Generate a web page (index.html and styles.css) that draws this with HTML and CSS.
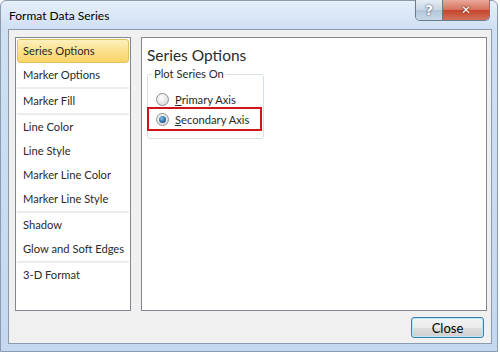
FILE: index.html
```html
<!DOCTYPE html>
<html>
    <head>
        <meta charset="utf-8">
        <title>Format Data Series</title>
        <link rel="stylesheet" href="styles.css">
    </head>
    <body>
        <div class="window">
            <div class="titlebar">
                <span class="title">Format Data Series</span>
                <div class="capbtns">
                    <span class="capbtn help">?</span>
                    <span class="capbtn close">&#x2715;</span>
                </div>
            </div>

            <div class="client">
                <div class="main">
                    <ul class="navlist">
                        <li class="item selected">Series Options</li>
                        <li class="item">Marker Options</li>
                        <li class="sep"></li>
                        <li class="item">Marker Fill</li>
                        <li class="sep"></li>
                        <li class="item">Line Color</li>
                        <li class="item">Line Style</li>
                        <li class="item">Marker Line Color</li>
                        <li class="item">Marker Line Style</li>
                        <li class="sep"></li>
                        <li class="item">Shadow</li>
                        <li class="item">Glow and Soft Edges</li>
                        <li class="sep"></li>
                        <li class="item">3-D Format</li>
                    </ul>

                    <div class="panel">
                        <div class="heading">Series Options</div>
                        <fieldset class="group">
                            <legend>Plot Series On</legend>
                            <div class="radio">
                                <span class="dot"></span>
                                <span><u>P</u>rimary Axis</span>
                            </div>
                            <div class="radio checked marked">
                                <span class="dot"></span>
                                <span><u>S</u>econdary Axis</span>
                            </div>
                        </fieldset>
                    </div>
                </div>

                <div class="footer">
                    <button class="btn">Close</button>
                </div>
            </div>
        </div>
    </body>
</html>
```

FILE: styles.css
```css
body {
    margin: 0;
    background: #ffffff;
    font-family: Lato, "Noto Sans", sans-serif;
    font-size: 11.2px;
    color: #000000;
}

.window {
    box-sizing: border-box;
    width: 498px;
    height: 352px;
    border: 1px solid #8b9cb1;
    border-radius: 6px 6px 0 0;
    background: linear-gradient(to bottom, #e6effa 0, #cfe0f3 28px, #c4d8ef 100%);
    display: flex;
    flex-direction: column;
}

/* title bar */
.titlebar {
    height: 28px;
    display: flex;
    align-items: flex-start;
}

.title {
    padding: 7px 0 0 8px;
    font-size: 12px;
    line-height: 16px;
    color: #000000;
}

.capbtns {
    margin: -1px 7px 0 auto;
    display: flex;
    height: 20px;
    border: 1px solid #6d7a8c;
    border-top: none;
    border-radius: 0 0 5px 5px;
    overflow: hidden;
}

.capbtn {
    display: flex;
    align-items: center;
    justify-content: center;
    color: #ffffff;
}

.help {
    width: 26px;
    background: linear-gradient(to bottom, #e4ecf5 0, #c9d6e5 50%, #b4c5d9 51%, #c8d8ea 100%);
    border-right: 1px solid #6d7a8c;
    font-family: "DejaVu Sans", sans-serif;
    font-size: 14px;
    font-weight: bold;
    text-shadow: 0 0 2px #4a5a70, 0 0 1px #4a5a70;
}

.close {
    width: 46px;
    background: linear-gradient(to bottom, #e9a99a 0, #d7705c 50%, #c7442c 51%, #d2705a 100%);
    font-family: "DejaVu Sans", sans-serif;
    font-size: 12px;
    font-weight: bold;
    text-shadow: 0 0 2px #5a1c10, 0 0 1px #5a1c10;
}

/* client area */
.client {
    flex: 1;
    margin: 0 5px 7px 7px;
    border: 1px solid #8a9bb0;
    background: #f0f0f0;
    padding: 7px 4px 5px 6px;
    display: flex;
    flex-direction: column;
}

.main {
    height: 274px;
    display: flex;
    gap: 10px;
}

.navlist {
    box-sizing: border-box;
    width: 116px;
    margin: 0;
    padding: 1px;
    list-style: none;
    background: #ffffff;
    border: 1px solid #828790;
}

.item {
    height: 24px;
    line-height: 24px;
    padding-left: 6px;
    white-space: nowrap;
    color: #2a2a2a;
}

.item.selected {
    box-sizing: border-box;
    line-height: 22px;
    padding-left: 5px;
    border: 1px solid #e3c15f;
    border-radius: 3px;
    background: linear-gradient(to bottom, #fdf0bf 0, #fbe18d 50%, #f8d56a 100%);
}

.sep {
    height: 2px;
    background: #ececec;
}

.panel {
    flex: 1;
    background: #ffffff;
    border: 1px solid #828790;
    padding: 7px 0 0 5px;
}

.heading {
    font-size: 15.5px;
    line-height: 20px;
    color: #2a2a2a;
}

.group {
    box-sizing: border-box;
    width: 117px;
    margin: 1px 0 0 0;
    padding: 9px 0 7px 0;
    border: 1px solid #d5dfe5;
    border-radius: 3px;
}

.group legend {
    margin-left: 4px;
    padding: 0 2px;
    line-height: 16px;
    color: #2a2a2a;
}

.radio {
    display: flex;
    align-items: center;
    gap: 6px;
    height: 17px;
    padding-left: 8px;
    color: #2a2a2a;
}

.radio.marked {
    height: 20px;
    margin: -1px 1px 0 -1px;
    border: 2px solid #d0141c;
    padding-left: 7px;
}

.dot {
    box-sizing: border-box;
    width: 13px;
    height: 13px;
    border-radius: 50%;
    border: 1px solid #8e8f8f;
    background: radial-gradient(circle at 40% 35%, #ffffff 0, #e6e6e6 55%, #cfcfcf 100%);
    display: flex;
    align-items: center;
    justify-content: center;
}

.checked .dot::after {
    content: "";
    width: 7px;
    height: 7px;
    border-radius: 50%;
    background: radial-gradient(circle at 40% 35%, #8fc4ea 0, #2a6ba8 55%, #1a3f6a 100%);
}

.footer {
    flex: 1;
    display: flex;
    justify-content: flex-end;
    align-items: flex-end;
    padding-right: 3px;
}

.btn {
    box-sizing: border-box;
    width: 73px;
    height: 21px;
    font-family: inherit;
    font-size: 13px;
    color: #000000;
    border: 1px solid #3c7fb1;
    border-radius: 3px;
    background: linear-gradient(to bottom, #f4f4f4 0, #ebebeb 50%, #dddddd 51%, #d0d0d0 100%);
    box-shadow: inset 0 0 0 1px #b7e6fb;
    padding: 0;
}
```
